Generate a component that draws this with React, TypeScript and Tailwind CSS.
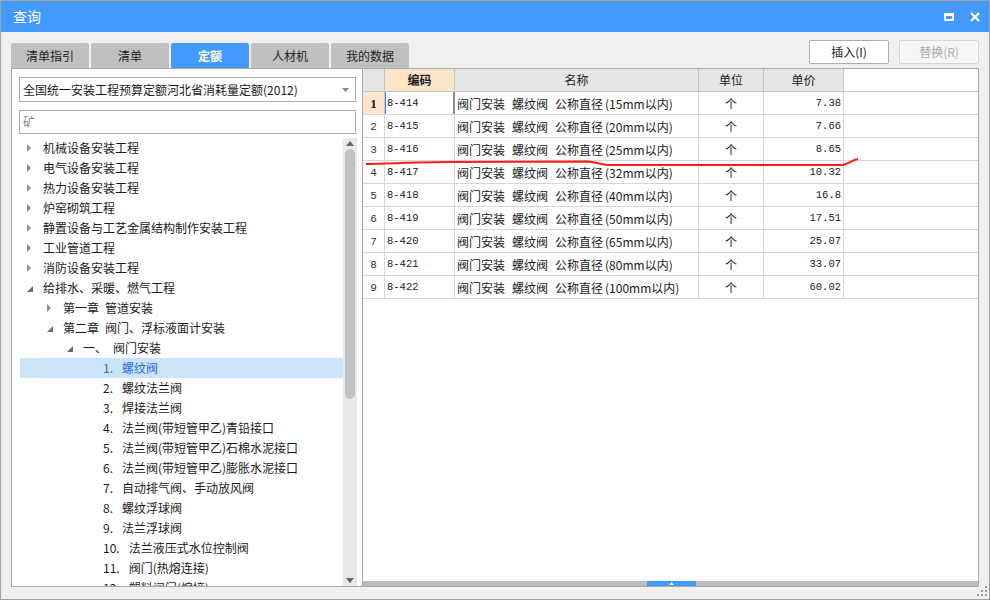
import React from "react";

type Node = {
  level: number;
  text: string;
  num?: string;
  arrow?: "closed" | "open";
  selected?: boolean;
};

const tree: Node[] = [
  { level: 0, text: "机械设备安装工程", arrow: "closed" },
  { level: 0, text: "电气设备安装工程", arrow: "closed" },
  { level: 0, text: "热力设备安装工程", arrow: "closed" },
  { level: 0, text: "炉窑砌筑工程", arrow: "closed" },
  { level: 0, text: "静置设备与工艺金属结构制作安装工程", arrow: "closed" },
  { level: 0, text: "工业管道工程", arrow: "closed" },
  { level: 0, text: "消防设备安装工程", arrow: "closed" },
  { level: 0, text: "给排水、采暖、燃气工程", arrow: "open" },
  { level: 1, num: "第一章", text: "管道安装", arrow: "closed" },
  { level: 1, num: "第二章", text: "阀门、浮标液面计安装", arrow: "open" },
  { level: 2, num: "一、", text: "阀门安装", arrow: "open" },
  { level: 3, num: "1.", text: "螺纹阀", selected: true },
  { level: 3, num: "2.", text: "螺纹法兰阀" },
  { level: 3, num: "3.", text: "焊接法兰阀" },
  { level: 3, num: "4.", text: "法兰阀(带短管甲乙)青铅接口" },
  { level: 3, num: "5.", text: "法兰阀(带短管甲乙)石棉水泥接口" },
  { level: 3, num: "6.", text: "法兰阀(带短管甲乙)膨胀水泥接口" },
  { level: 3, num: "7.", text: "自动排气阀、手动放风阀" },
  { level: 3, num: "8.", text: "螺纹浮球阀" },
  { level: 3, num: "9.", text: "法兰浮球阀" },
  { level: 3, num: "10.", text: "法兰液压式水位控制阀" },
  { level: 3, num: "11.", text: "阀门(热熔连接)" },
  { level: 3, num: "12.", text: "塑料阀门(熔接)" },
];

const rows = [
  ["8-414", "15", "7.38"],
  ["8-415", "20", "7.66"],
  ["8-416", "25", "8.65"],
  ["8-417", "32", "10.32"],
  ["8-418", "40", "16.8"],
  ["8-419", "50", "17.51"],
  ["8-420", "65", "25.07"],
  ["8-421", "80", "33.07"],
  ["8-422", "100", "60.02"],
];

const tabs = ["清单指引", "清单", "定额", "人材机", "我的数据"];

const Arrow = ({ type }: { type?: "closed" | "open" }) => {
  if (type === "closed")
    return (
      <svg width="5" height="8" viewBox="0 0 5 8" className="ml-[7px]">
        <path d="M0 0 L4 4 L0 8 Z" fill="#8f8f8f" />
      </svg>
    );
  if (type === "open")
    return (
      <svg width="7" height="7" viewBox="0 0 7 7" className="ml-[7px] mt-[3px]">
        <path d="M6 0 L6 6 L0 6 Z" fill="#6b6b6b" />
      </svg>
    );
  return null;
};

export default function App() {
  return (
    <div className="relative flex h-[600px] w-[990px] flex-col border border-[#a3a3a3] bg-[#f0f0f0] font-['Noto_Sans_CJK_SC',sans-serif] text-[12px] text-[#1a1a1a]">
      {/* 标题栏 */}
      <div className="flex h-[31px] items-center justify-between bg-[#4499ff] pl-[12px] pr-[9px] text-white">
        <span className="text-[14px]">查询</span>
        <div className="flex items-center gap-[16px]">
          <div className="h-[8px] w-[10px] border-2 border-t-[3px] border-white" />
          <svg width="10" height="10" viewBox="0 0 10 10">
            <path d="M1 1 L9 9 M9 1 L1 9" stroke="white" strokeWidth="2.2" />
          </svg>
        </div>
      </div>

      {/* 页签 + 按钮 */}
      <div className="flex h-[36px] justify-between px-[10px]">
        <div className="flex items-end gap-[2px]">
          {tabs.map((t) => (
            <div
              key={t}
              className={
                t === "定额"
                  ? "flex h-[25px] w-[78px] items-center justify-center rounded-t-[2px] bg-[#4499ff] font-bold text-white"
                  : "flex h-[25px] w-[78px] items-center justify-center rounded-t-[2px] bg-[#c0c0c0] text-[#222]"
              }
            >
              {t}
            </div>
          ))}
        </div>
        <div className="mt-[8px] flex gap-[10px]">
          <div className="flex h-[24px] w-[80px] items-center justify-center rounded-[2px] border border-[#adadad] bg-white">
            插入(I)
          </div>
          <div className="flex h-[24px] w-[80px] items-center justify-center rounded-[2px] border border-[#d6d6d6] bg-[#f6f6f6] text-[#aaaaaa]">
            替换(R)
          </div>
        </div>
      </div>

      {/* 内容 */}
      <div className="flex h-[519px] px-[10px]">
        {/* 左侧 */}
        <div className="flex w-[351px] flex-col border border-r-0 border-[#a9a9a9] bg-white">
          <div className="ml-[7px] mt-[8px] flex h-[25px] w-[337px] items-center justify-between border border-[#adadad] pl-[3px] pr-[6px]">
            <span>全国统一安装工程预算定额河北省消耗量定额(2012)</span>
            <svg width="7" height="4" viewBox="0 0 7 4">
              <path d="M0 0 L7 0 L3.5 4 Z" fill="#888" />
            </svg>
          </div>
          <div className="ml-[7px] mt-[8px] flex h-[24px] w-[337px] items-center border border-[#adadad] pl-[3px] text-[#888]">
            矿
          </div>
          <div className="ml-[8px] mr-[5px] mt-[4px] flex min-h-0 flex-1">
            <div className="flex-1 overflow-hidden">
              {tree.map((n, i) => (
                <div
                  key={i}
                  className={
                    n.selected
                      ? "flex h-[20px] items-center bg-[#cce4f7] text-[#1f6fd6]"
                      : "flex h-[20px] items-center"
                  }
                  style={{ paddingLeft: n.level * 20 }}
                >
                  <div className="flex h-[20px] w-[23px] shrink-0 items-center">
                    <Arrow type={n.arrow} />
                  </div>
                  {n.num && <span className="whitespace-pre">{n.num}</span>}
                  <span
                    className={
                      n.num
                        ? n.level === 3
                          ? "ml-[9px] whitespace-nowrap"
                          : "ml-[6px] whitespace-nowrap"
                        : "whitespace-nowrap"
                    }
                  >
                    {n.text}
                  </span>
                </div>
              ))}
            </div>
            {/* 滚动条 */}
            <div className="flex w-[14px] flex-col items-center bg-[#e8e8e8]">
              <svg width="8" height="5" viewBox="0 0 8 5" className="mt-[3px]">
                <path d="M0 5 L4 0 L8 5 Z" fill="#666" />
              </svg>
              <div className="mt-[3px] h-[250px] w-[10px] rounded-full bg-[#c1c1c1]" />
              <div className="flex-1" />
              <svg width="8" height="5" viewBox="0 0 8 5" className="mb-[3px]">
                <path d="M0 0 L8 0 L4 5 Z" fill="#666" />
              </svg>
            </div>
          </div>
        </div>

        {/* 右侧 */}
        <div className="flex flex-1 flex-col border border-[#a9a9a9] bg-white">
          <div className="flex h-[23px] border-b border-[#c4c4c4]">
            <div className="w-[22px] border-r border-[#c4c4c4] bg-[#e6e6e6]" />
            <div className="flex w-[70px] items-center justify-center border-r border-[#c4c4c4] bg-[#fde5c9] font-bold">
              编码
            </div>
            <div className="flex w-[244px] items-center justify-center border-r border-[#c4c4c4] bg-[#e6e6e6]">名称</div>
            <div className="flex w-[65px] items-center justify-center border-r border-[#c4c4c4] bg-[#e6e6e6]">单位</div>
            <div className="flex w-[80px] items-center justify-center border-r border-[#c4c4c4] bg-[#e6e6e6]">单价</div>
          </div>
          {rows.map((r, i) => (
            <div key={r[0]} className="flex h-[23px] border-b border-[#d6d6d6]">
              <div
                className={
                  i === 0
                    ? "flex w-[22px] items-center justify-center border-r border-[#c4c4c4] bg-[#fde5c9] pt-[1px] font-['Liberation_Serif',serif] text-[13px] font-bold"
                    : "flex w-[22px] items-center justify-center border-r border-[#d6d6d6] pt-[2px] font-['Liberation_Mono',monospace] text-[11px] text-[#333]"
                }
              >
                {i + 1}
              </div>
              <div
                className={
                  i === 0
                    ? "flex w-[70px] items-center border-l border-r-2 border-l-[#3d8cff] border-r-[#8a8a8a] pl-[1px] pt-[2px] font-['Liberation_Mono',monospace] text-[10.5px]"
                    : "flex w-[70px] items-center border-r border-[#d6d6d6] pl-[2px] pt-[2px] font-['Liberation_Mono',monospace] text-[10.5px]"
                }
              >
                {r[0]}
              </div>
              <div className="flex w-[244px] items-center whitespace-nowrap border-r border-[#d6d6d6] pl-[2px] pt-[1px]">
                <span>阀门安装</span>
                <span className="ml-[7px]">螺纹阀</span>
                <span className="ml-[7px]">公称直径</span>
                <span className="ml-[2px]">({r[1]}mm以内)</span>
              </div>
              <div className="flex w-[65px] items-center justify-center border-r border-[#d6d6d6] pt-[1px]">个</div>
              <div className="flex w-[80px] items-center justify-end border-r border-[#d6d6d6] pr-[2px] pt-[2px] font-['Liberation_Mono',monospace] text-[10.5px]">
                {r[2]}
              </div>
            </div>
          ))}
          <div className="flex-1" />
          {/* 水平滚动条 */}
          <div className="flex h-[5px] bg-[#bdbdbd]">
            <div className="w-[284px]" />
            <div className="flex w-[49px] justify-center bg-[#4499ff]">
              <svg width="5" height="3" viewBox="0 0 5 3" className="mt-[1px]">
                <path d="M0 3 L2.5 0 L5 3 Z" fill="white" />
              </svg>
            </div>
          </div>
        </div>
      </div>

      {/* 红色标注线 */}
      <svg className="pointer-events-none absolute left-0 top-0" width="990" height="600">
        <path
          d="M365 163 C 400 162, 430 161, 450 161 L 586 160.5 C 594 161, 598 163, 606 164 L 842 164 C 848 162, 852 159, 857 158"
          stroke="#ff1c1c"
          strokeWidth="2"
          fill="none"
        />
      </svg>

      {/* 缩放角 */}
      <div className="absolute bottom-[3px] right-[2px] grid grid-cols-3 gap-[2px]">
        <div className="h-[2px] w-[2px]" />
        <div className="h-[2px] w-[2px]" />
        <div className="h-[2px] w-[2px] bg-[#9a9a9a]" />
        <div className="h-[2px] w-[2px]" />
        <div className="h-[2px] w-[2px] bg-[#9a9a9a]" />
        <div className="h-[2px] w-[2px] bg-[#9a9a9a]" />
        <div className="h-[2px] w-[2px] bg-[#9a9a9a]" />
        <div className="h-[2px] w-[2px] bg-[#9a9a9a]" />
        <div className="h-[2px] w-[2px] bg-[#9a9a9a]" />
      </div>
    </div>
  );
}
